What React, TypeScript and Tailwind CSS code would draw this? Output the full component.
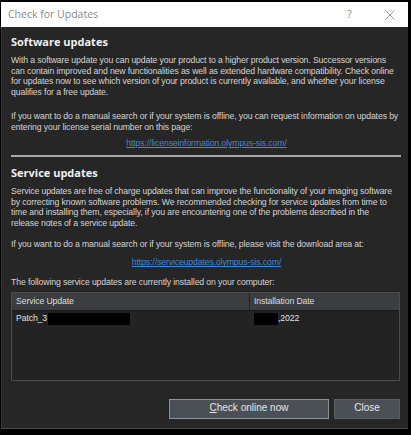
import React from "react";

const L = ({ children }: { children: React.ReactNode }) => (
  <div className="whitespace-nowrap">{children}</div>
);

export default function App() {
  return (
    <div className="w-[411px] h-[435px] bg-black pt-[2px] pl-[1px] pr-[3px] pb-[6px] flex flex-col" style={{ fontFamily: '"Liberation Sans", Arial, sans-serif' }}>
      <div className="h-[25px] bg-white flex items-center pl-[7px] shrink-0">
        <span className="text-[10.5px] text-[#8a8a8a] flex-1" style={{ fontFamily: '"Open Sans", sans-serif' }}>Check for Updates</span>
        <span className="text-[11px] text-[#8a8a8a] w-[10px] mr-[28px]" style={{ fontFamily: '"Open Sans", sans-serif' }}>?</span>
        <svg width="10" height="10" viewBox="0 0 10 10" className="mr-[13px]">
          <path d="M0.5 0.5 L9.5 9.5 M9.5 0.5 L0.5 9.5" stroke="#9a9a9a" strokeWidth="1" />
        </svg>
      </div>
      <div className="flex-1 bg-[#262626] border-l border-[#3a3a3a] border-b border-b-[#4a4a4a] flex flex-col pl-[9px] pr-[6px] pt-[8px] text-[#d4d4d4] text-[8.7px] tracking-[-0.12px] leading-[10.7px]">
        <div className="text-[11px] font-bold text-[#f0f0f0] leading-[14px] tracking-normal" style={{ fontFamily: '"Open Sans", sans-serif' }}>Software updates</div>
        <div className="mt-[6px]">
          <L>With a software update you can update your product to a higher product version. Successor versions</L>
          <L>can contain improved and new functionalities as well as extended hardware compatibility. Check online</L>
          <L>for updates now to see which version of your product is currently available, and whether your license</L>
          <L>qualifies for a free update.</L>
        </div>
        <div className="mt-[13px]">
          <L>If you want to do a manual search or if your system is offline, you can request information on updates by</L>
          <L>entering your license serial number on this page:</L>
        </div>
        <div className="mt-[6px] text-center">
          <span className="text-[#3a8ad8] underline">https://licenseinformation.olympus-sis.com/</span>
        </div>
        <div className="mt-[6px] h-[2px] bg-[#a8a8a8] mr-[1px]" />
        <div className="mt-[9px] text-[11px] font-bold text-[#f0f0f0] leading-[14px] tracking-normal" style={{ fontFamily: '"Open Sans", sans-serif' }}>Service updates</div>
        <div className="mt-[6px]">
          <L>Service updates are free of charge updates that can improve the functionality of your imaging software</L>
          <L>by correcting known software problems. We recommended checking for service updates from time to</L>
          <L>time and installing them, especially, if you are encountering one of the problems described in the</L>
          <L>release notes of a service update.</L>
        </div>
        <div className="mt-[10px]">
          <L>If you want to do a manual search or if your system is offline, please visit the download area at:</L>
        </div>
        <div className="mt-[8px] text-center">
          <span className="text-[#3a8ad8] underline">https://serviceupdates.olympus-sis.com/</span>
        </div>
        <div className="mt-[9px]">
          <L>The following service updates are currently installed on your computer:</L>
        </div>
        <div className="mt-[4px] h-[89px] border border-[#4a4a4a] bg-[#232323] flex flex-col mr-[2px]">
          <div className="flex h-[18px] bg-[#3b3e41] border-b border-[#1a1a1a] text-[#dcdcdc]">
            <div className="w-[238px] border-r border-[#222] flex items-center pl-[4px]">Service Update</div>
            <div className="flex-1 flex items-center pl-[4px]">Installation Date</div>
          </div>
          <div className="flex h-[16px] items-center text-[#e0e0e0]">
            <div className="w-[238px] flex items-center pl-[4px]">
              <span>Patch_3</span>
              <span className="ml-[1px] w-[82px] h-[12px] bg-black" />
            </div>
            <div className="flex-1 flex items-center pl-[4px]">
              <span className="w-[24px] h-[12px] bg-black" />
              <span>,2022</span>
            </div>
          </div>
        </div>
        <div className="mt-[18px] flex justify-end gap-[5px] mr-[2px]">
          <button className="w-[160px] h-[20px] bg-[#4b5056] border border-[#8d9297] text-[#e6e6e6] text-[10px] tracking-normal">
            <span className="underline">C</span>heck online now
          </button>
          <button className="w-[66px] h-[20px] bg-[#4b5056] border border-[#5a5f64] text-[#e6e6e6] text-[10px] tracking-normal">Close</button>
        </div>
      </div>
    </div>
  );
}
